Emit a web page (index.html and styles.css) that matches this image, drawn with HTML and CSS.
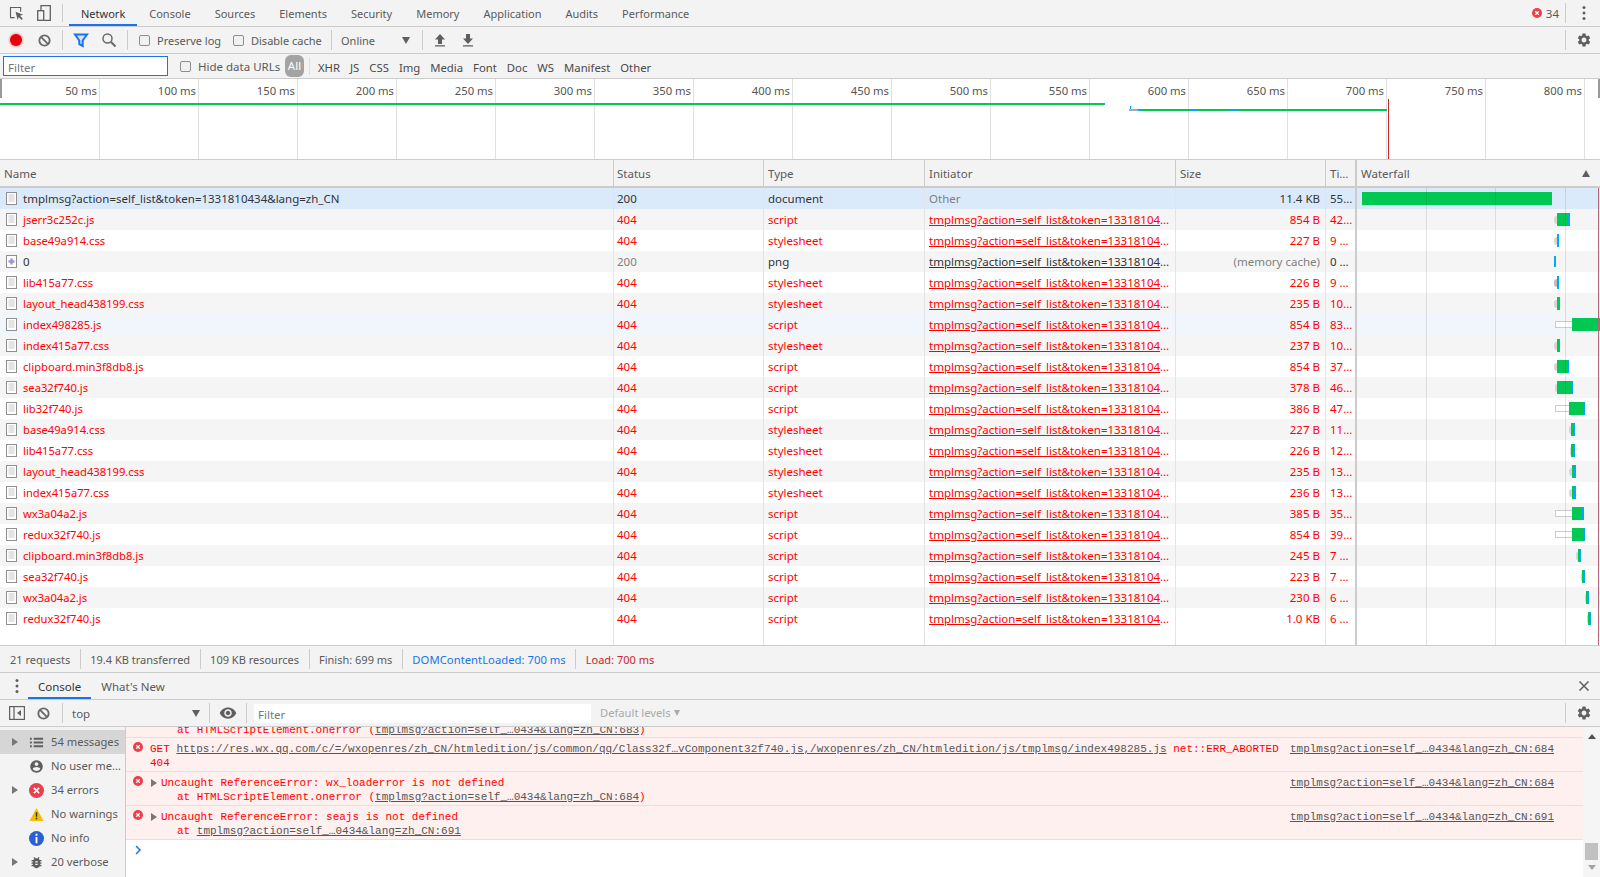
FILE: index.html
```html
<!DOCTYPE html>
<html lang="en">
<head>
<meta charset="utf-8">
<title>DevTools Network</title>
<link rel="stylesheet" href="styles.css">
</head>
<body>
<svg class="sprite" xmlns="http://www.w3.org/2000/svg">
  <symbol id="gear" viewBox="0 0 24 24"><path d="M19.14 12.94c.04-.3.06-.61.06-.94 0-.32-.02-.64-.07-.94l2.03-1.58c.18-.14.23-.41.12-.61l-1.92-3.32c-.12-.22-.37-.29-.59-.22l-2.39.96c-.5-.38-1.03-.7-1.62-.94l-.36-2.54c-.04-.24-.24-.41-.48-.41h-3.84c-.24 0-.43.17-.47.41l-.36 2.54c-.59.24-1.13.57-1.62.94l-2.39-.96c-.22-.08-.47 0-.59.22L2.74 8.87c-.12.21-.08.47.12.61l2.03 1.58c-.05.3-.09.63-.09.94s.02.64.07.94l-2.03 1.58c-.18.14-.23.41-.12.61l1.92 3.32c.12.22.37.29.59.22l2.39-.96c.5.38 1.03.7 1.62.94l.36 2.54c.05.24.24.41.48.41h3.84c.24 0 .44-.17.47-.41l.36-2.54c.59-.24 1.13-.56 1.62-.94l2.39.96c.22.08.47 0 .59-.22l1.92-3.32c.12-.22.07-.47-.12-.61l-2.01-1.58zM12 15.6c-1.98 0-3.6-1.62-3.6-3.6s1.62-3.6 3.6-3.6 3.6 1.62 3.6 3.6-1.62 3.6-3.6 3.6z" fill="#5f5f5f"/></symbol>
  <symbol id="clear" viewBox="0 0 16 16"><circle cx="8" cy="8" r="5.5" fill="none" stroke="#6a6a6a" stroke-width="2"/><path d="M4.2 4.2l7.6 7.6" stroke="#6a6a6a" stroke-width="2"/></symbol>
  <symbol id="err" viewBox="0 0 16 16"><circle cx="8" cy="8" r="8" fill="#e8404c"/><path d="M5.2 5.2l5.6 5.6M10.8 5.2l-5.6 5.6" stroke="#fff" stroke-width="1.8"/></symbol>
  <symbol id="doc" viewBox="0 0 11 13"><rect x=".5" y=".5" width="10" height="12" fill="#fff" stroke="#8f8f8f"/><path d="M2.5 3h6M2.5 5h6M2.5 7h6M2.5 9h6" stroke="#c8c8c8"/></symbol>
  <symbol id="imgf" viewBox="0 0 11 13"><rect x=".5" y=".5" width="10" height="12" fill="#fff" stroke="#8f8f8f"/><path d="M5.5 3.5v6M2.5 6.5h6" stroke="#9a9ac8" stroke-width="2.4"/></symbol>
</svg>

<div class="bar tabs">
  <svg class="ico inspect" viewBox="0 0 16 16"><path d="M1 1h12v5h-1.2V2.200H2.200v9.600H6V13H1z" fill="#5f5f5f"/><path d="M7 6l8 3.200-3.300 1.300 3 3-1.300 1.300-3-3L9.200 15z" fill="#5f5f5f"/></svg>
  <svg class="ico device" viewBox="0 0 14 16"><path d="M4 5V.7h9.300v14.600H7" fill="none" stroke="#5f5f5f" stroke-width="1.300"/><rect x=".7" y="5.700" width="6" height="9.600" fill="none" stroke="#5f5f5f" stroke-width="1.300"/></svg>
  <span class="sep sep-tabs"></span>
  <span class="tab active">Network</span>
  <span class="tab">Console</span>
  <span class="tab">Sources</span>
  <span class="tab">Elements</span>
  <span class="tab">Security</span>
  <span class="tab">Memory</span>
  <span class="tab">Application</span>
  <span class="tab">Audits</span>
  <span class="tab">Performance</span>
  <span class="grow"></span>
  <svg class="ico err-top"><use href="#err"/></svg>
  <span class="err-count">34</span>
  <span class="sep"></span>
  <svg class="ico dots" viewBox="0 0 4 16"><circle cx="2" cy="2.500" r="1.500"/><circle cx="2" cy="8" r="1.500"/><circle cx="2" cy="13.500" r="1.500"/></svg>
</div>

<div class="bar toolbar">
  <span class="btn"><span class="record"></span></span>
  <span class="btn"><svg class="ico i14"><use href="#clear"/></svg></span>
  <span class="sep sep-m"></span>
  <span class="btn"><svg class="ico i15" viewBox="0 0 16 16"><path d="M2 2.500h12L9.700 8.500v5.500l-3.400-1.800V8.500z" fill="#cfe2fb" stroke="#1a73e8" stroke-width="2"/></svg></span>
  <span class="btn"><svg class="ico i15" viewBox="0 0 16 16"><circle cx="6.500" cy="6.500" r="4.500" fill="none" stroke="#6a6a6a" stroke-width="1.500"/><path d="M10 10l4.500 4.500" stroke="#6a6a6a" stroke-width="2"/></svg></span>
  <span class="sep sep-m"></span>
  <label class="check lbl-preserve"><input type="checkbox">Preserve log</label>
  <label class="check lbl-cache"><input type="checkbox">Disable cache</label>
  <span class="sep"></span>
  <span class="online">Online</span>
  <span class="tri-down"></span>
  <span class="sep sep-online"></span>
  <span class="btn"><svg class="ico i13" viewBox="0 0 12 14"><path d="M6 1l5 5.500H8V11H4V6.500H1zM1 12.200h10v1.300H1z" fill="#5f5f5f"/></svg></span>
  <span class="btn"><svg class="ico i13" viewBox="0 0 12 14"><path d="M6 11L1 5.500h3V1h4v4.500h3zM1 12.200h10v1.300H1z" fill="#5f5f5f"/></svg></span>
  <span class="grow"></span>
  <span class="sep"></span>
  <svg class="ico gear"><use href="#gear"/></svg>
</div>

<div class="bar filterbar">
  <span class="filter-input">Filter</span>
  <label class="check lbl-hide"><input type="checkbox">Hide data URLs</label>
  <span class="pill">All</span>
  <span class="sep sep-all"></span>
  <span class="ftype">XHR</span>
  <span class="ftype">JS</span>
  <span class="ftype">CSS</span>
  <span class="ftype">Img</span>
  <span class="ftype">Media</span>
  <span class="ftype">Font</span>
  <span class="ftype">Doc</span>
  <span class="ftype">WS</span>
  <span class="ftype">Manifest</span>
  <span class="ftype">Other</span>
</div>

<div class="overview">
  <div class="ticks">
    <span class="tick">50 ms</span><span class="tick">100 ms</span><span class="tick">150 ms</span><span class="tick">200 ms</span><span class="tick">250 ms</span><span class="tick">300 ms</span><span class="tick">350 ms</span><span class="tick">400 ms</span><span class="tick">450 ms</span><span class="tick">500 ms</span><span class="tick">550 ms</span><span class="tick">600 ms</span><span class="tick">650 ms</span><span class="tick">700 ms</span><span class="tick">750 ms</span><span class="tick">800 ms</span>
  </div>
  <span class="grab grab-l"></span>
  <span class="grab grab-r"></span>
  <span class="ov-line1"></span>
  <span class="ov-tick"></span>
  <span class="ov-line2"></span>
  <span class="ov-load"></span>
</div>

<div class="net-row net-head">
  <span class="cell cname">Name</span>
  <span class="cell">Status</span>
  <span class="cell">Type</span>
  <span class="cell">Initiator</span>
  <span class="cell">Size</span>
  <span class="cell">Ti…</span>
  <span class="cell cwf">Waterfall<span class="tri-up"></span></span>
</div>

<div class="rows">
  <div class="net-row sel">
    <span class="cell cname"><svg class="fico"><use href="#doc"/></svg>tmplmsg?action=self_list&amp;token=1331810434&amp;lang=zh_CN</span>
    <span class="cell">200</span><span class="cell">document</span><span class="cell muted">Other</span><span class="cell csize">11.4 KB</span><span class="cell">55…</span>
    <span class="wf"><i class="r" style="margin-left:5px;width:189px"></i><i class="d" style="width:1px"></i></span>
  </div>
  <div class="net-row err alt">
    <span class="cell cname"><svg class="fico"><use href="#doc"/></svg>jserr3c252c.js</span>
    <span class="cell">404</span><span class="cell">script</span><span class="cell"><a>tmplmsg?action=self_list&amp;token=13318104</a>…</span><span class="cell csize">854 B</span><span class="cell">42…</span>
    <span class="wf"><i class="w" style="margin-left:197px;width:3px"></i><i class="r" style="width:11px"></i><i class="d" style="width:2px"></i></span>
  </div>
  <div class="net-row err">
    <span class="cell cname"><svg class="fico"><use href="#doc"/></svg>base49a914.css</span>
    <span class="cell">404</span><span class="cell">stylesheet</span><span class="cell"><a>tmplmsg?action=self_list&amp;token=13318104</a>…</span><span class="cell csize">227 B</span><span class="cell">9 …</span>
    <span class="wf"><i class="w" style="margin-left:197px;width:3px"></i><i class="r" style="width:1px"></i><i class="d" style="width:1px"></i></span>
  </div>
  <div class="net-row alt">
    <span class="cell cname"><svg class="fico"><use href="#imgf"/></svg>0</span>
    <span class="cell muted">200</span><span class="cell">png</span><span class="cell"><a>tmplmsg?action=self_list&amp;token=13318104</a>…</span><span class="cell csize muted">(memory cache)</span><span class="cell">0 …</span>
    <span class="wf"><i class="d short" style="margin-left:197px;width:2px"></i></span>
  </div>
  <div class="net-row err">
    <span class="cell cname"><svg class="fico"><use href="#doc"/></svg>lib415a77.css</span>
    <span class="cell">404</span><span class="cell">stylesheet</span><span class="cell"><a>tmplmsg?action=self_list&amp;token=13318104</a>…</span><span class="cell csize">226 B</span><span class="cell">9 …</span>
    <span class="wf"><i class="w dark" style="margin-left:197px;width:3px"></i><i class="r" style="width:1px"></i><i class="d" style="width:1px"></i></span>
  </div>
  <div class="net-row err alt">
    <span class="cell cname"><svg class="fico"><use href="#doc"/></svg>layout_head438199.css</span>
    <span class="cell">404</span><span class="cell">stylesheet</span><span class="cell"><a>tmplmsg?action=self_list&amp;token=13318104</a>…</span><span class="cell csize">235 B</span><span class="cell">10…</span>
    <span class="wf"><i class="w" style="margin-left:197px;width:3px"></i><i class="r" style="width:2px"></i><i class="d" style="width:1px"></i></span>
  </div>
  <div class="net-row err hover">
    <span class="cell cname"><svg class="fico"><use href="#doc"/></svg>index498285.js</span>
    <span class="cell">404</span><span class="cell">script</span><span class="cell"><a>tmplmsg?action=self_list&amp;token=13318104</a>…</span><span class="cell csize">854 B</span><span class="cell">83…</span>
    <span class="wf"><i class="q" style="margin-left:198px;width:17px"></i><i class="r" style="width:28px"></i></span>
  </div>
  <div class="net-row err alt">
    <span class="cell cname"><svg class="fico"><use href="#doc"/></svg>index415a77.css</span>
    <span class="cell">404</span><span class="cell">stylesheet</span><span class="cell"><a>tmplmsg?action=self_list&amp;token=13318104</a>…</span><span class="cell csize">237 B</span><span class="cell">10…</span>
    <span class="wf"><i class="w" style="margin-left:197px;width:3px"></i><i class="r" style="width:2px"></i><i class="d" style="width:1px"></i></span>
  </div>
  <div class="net-row err">
    <span class="cell cname"><svg class="fico"><use href="#doc"/></svg>clipboard.min3f8db8.js</span>
    <span class="cell">404</span><span class="cell">script</span><span class="cell"><a>tmplmsg?action=self_list&amp;token=13318104</a>…</span><span class="cell csize">854 B</span><span class="cell">37…</span>
    <span class="wf"><i class="w" style="margin-left:197px;width:3px"></i><i class="r" style="width:11px"></i><i class="d" style="width:1px"></i></span>
  </div>
  <div class="net-row err alt">
    <span class="cell cname"><svg class="fico"><use href="#doc"/></svg>sea32f740.js</span>
    <span class="cell">404</span><span class="cell">script</span><span class="cell"><a>tmplmsg?action=self_list&amp;token=13318104</a>…</span><span class="cell csize">378 B</span><span class="cell">46…</span>
    <span class="wf"><i class="w" style="margin-left:198px;width:2px"></i><i class="r" style="width:15px"></i><i class="d" style="width:1px"></i></span>
  </div>
  <div class="net-row err">
    <span class="cell cname"><svg class="fico"><use href="#doc"/></svg>lib32f740.js</span>
    <span class="cell">404</span><span class="cell">script</span><span class="cell"><a>tmplmsg?action=self_list&amp;token=13318104</a>…</span><span class="cell csize">386 B</span><span class="cell">47…</span>
    <span class="wf"><i class="q" style="margin-left:198px;width:14px"></i><i class="r" style="width:15px"></i><i class="d" style="width:1px"></i></span>
  </div>
  <div class="net-row err alt">
    <span class="cell cname"><svg class="fico"><use href="#doc"/></svg>base49a914.css</span>
    <span class="cell">404</span><span class="cell">stylesheet</span><span class="cell"><a>tmplmsg?action=self_list&amp;token=13318104</a>…</span><span class="cell csize">227 B</span><span class="cell">11…</span>
    <span class="wf"><i class="w" style="margin-left:212px;width:2px"></i><i class="r" style="width:3px"></i><i class="d" style="width:1px"></i></span>
  </div>
  <div class="net-row err">
    <span class="cell cname"><svg class="fico"><use href="#doc"/></svg>lib415a77.css</span>
    <span class="cell">404</span><span class="cell">stylesheet</span><span class="cell"><a>tmplmsg?action=self_list&amp;token=13318104</a>…</span><span class="cell csize">226 B</span><span class="cell">12…</span>
    <span class="wf"><i class="w" style="margin-left:213px;width:1px"></i><i class="r" style="width:3px"></i><i class="d" style="width:1px"></i></span>
  </div>
  <div class="net-row err alt">
    <span class="cell cname"><svg class="fico"><use href="#doc"/></svg>layout_head438199.css</span>
    <span class="cell">404</span><span class="cell">stylesheet</span><span class="cell"><a>tmplmsg?action=self_list&amp;token=13318104</a>…</span><span class="cell csize">235 B</span><span class="cell">13…</span>
    <span class="wf"><i class="w" style="margin-left:212px;width:3px"></i><i class="r" style="width:2px"></i><i class="d" style="width:2px"></i></span>
  </div>
  <div class="net-row err">
    <span class="cell cname"><svg class="fico"><use href="#doc"/></svg>index415a77.css</span>
    <span class="cell">404</span><span class="cell">stylesheet</span><span class="cell"><a>tmplmsg?action=self_list&amp;token=13318104</a>…</span><span class="cell csize">236 B</span><span class="cell">13…</span>
    <span class="wf"><i class="w" style="margin-left:212px;width:3px"></i><i class="r" style="width:2px"></i><i class="d" style="width:2px"></i></span>
  </div>
  <div class="net-row err alt">
    <span class="cell cname"><svg class="fico"><use href="#doc"/></svg>wx3a04a2.js</span>
    <span class="cell">404</span><span class="cell">script</span><span class="cell"><a>tmplmsg?action=self_list&amp;token=13318104</a>…</span><span class="cell csize">385 B</span><span class="cell">35…</span>
    <span class="wf"><i class="q" style="margin-left:198px;width:17px"></i><i class="r" style="width:10px"></i><i class="d" style="width:2px"></i></span>
  </div>
  <div class="net-row err">
    <span class="cell cname"><svg class="fico"><use href="#doc"/></svg>redux32f740.js</span>
    <span class="cell">404</span><span class="cell">script</span><span class="cell"><a>tmplmsg?action=self_list&amp;token=13318104</a>…</span><span class="cell csize">854 B</span><span class="cell">39…</span>
    <span class="wf"><i class="q" style="margin-left:198px;width:17px"></i><i class="r" style="width:12px"></i><i class="d" style="width:1px"></i></span>
  </div>
  <div class="net-row err alt">
    <span class="cell cname"><svg class="fico"><use href="#doc"/></svg>clipboard.min3f8db8.js</span>
    <span class="cell">404</span><span class="cell">script</span><span class="cell"><a>tmplmsg?action=self_list&amp;token=13318104</a>…</span><span class="cell csize">245 B</span><span class="cell">7 …</span>
    <span class="wf"><i class="w" style="margin-left:219px;width:2px"></i><i class="r" style="width:2px"></i><i class="d" style="width:1px"></i></span>
  </div>
  <div class="net-row err">
    <span class="cell cname"><svg class="fico"><use href="#doc"/></svg>sea32f740.js</span>
    <span class="cell">404</span><span class="cell">script</span><span class="cell"><a>tmplmsg?action=self_list&amp;token=13318104</a>…</span><span class="cell csize">223 B</span><span class="cell">7 …</span>
    <span class="wf"><i class="w" style="margin-left:224px;width:1px"></i><i class="r" style="width:1px"></i><i class="d" style="width:2px"></i></span>
  </div>
  <div class="net-row err alt">
    <span class="cell cname"><svg class="fico"><use href="#doc"/></svg>wx3a04a2.js</span>
    <span class="cell">404</span><span class="cell">script</span><span class="cell"><a>tmplmsg?action=self_list&amp;token=13318104</a>…</span><span class="cell csize">230 B</span><span class="cell">6 …</span>
    <span class="wf"><i class="w" style="margin-left:228px;width:1px"></i><i class="r" style="width:1px"></i><i class="d" style="width:2px"></i></span>
  </div>
  <div class="net-row err">
    <span class="cell cname"><svg class="fico"><use href="#doc"/></svg>redux32f740.js</span>
    <span class="cell">404</span><span class="cell">script</span><span class="cell"><a>tmplmsg?action=self_list&amp;token=13318104</a>…</span><span class="cell csize">1.0 KB</span><span class="cell">6 …</span>
    <span class="wf"><i class="w" style="margin-left:230px;width:1px"></i><i class="r" style="width:2px"></i><i class="d" style="width:1px"></i></span>
  </div>
  <div class="net-row filler">
    <span class="cell"></span><span class="cell"></span><span class="cell"></span><span class="cell"></span><span class="cell"></span><span class="cell"></span><span class="wf"></span>
  </div>
  <span class="wgrid g1"></span>
  <span class="wgrid g2"></span>
  <span class="wgrid g3"></span>
  <span class="wload"></span>
</div>

<div class="bar statusbar">
  <span class="stat">21 requests</span>
  <span class="stat">19.4 KB transferred</span>
  <span class="stat">109 KB resources</span>
  <span class="stat">Finish: 699 ms</span>
  <span class="stat dcl">DOMContentLoaded: 700 ms</span>
  <span class="stat load">Load: 700 ms</span>
</div>

<div class="bar drawer-tabs">
  <svg class="ico dots dots-drawer" viewBox="0 0 4 16"><circle cx="2" cy="2.500" r="1.500"/><circle cx="2" cy="8" r="1.500"/><circle cx="2" cy="13.500" r="1.500"/></svg>
  <span class="tab active dtab">Console</span>
  <span class="tab dtab">What's New</span>
  <span class="grow"></span>
  <svg class="ico closex" viewBox="0 0 12 12"><path d="M1.500 1.500l9 9M10.500 1.500l-9 9" stroke="#5f5f5f" stroke-width="1.500"/></svg>
</div>

<div class="bar con-toolbar">
  <svg class="ico sidetoggle" viewBox="0 0 16 14"><rect x=".6" y=".6" width="14.800" height="12.800" fill="none" stroke="#5f5f5f" stroke-width="1.200"/><path d="M5 1v12" stroke="#5f5f5f" stroke-width="1.200"/><path d="M12 4v6L8 7z" fill="#5f5f5f"/></svg>
  <svg class="ico i14 conclear"><use href="#clear"/></svg>
  <span class="sep sep-conclear"></span>
  <span class="ctx">top</span>
  <span class="tri-down"></span>
  <span class="sep sep-ctx"></span>
  <svg class="ico eye" viewBox="0 0 24 24"><path d="M12 4.500C7 4.500 2.730 7.610 1 12c1.730 4.390 6 7.500 11 7.500s9.270-3.110 11-7.500c-1.730-4.390-6-7.500-11-7.500zM12 17c-2.760 0-5-2.240-5-5s2.240-5 5-5 5 2.240 5 5-2.240 5-5 5zm0-8c-1.660 0-3 1.340-3 3s1.340 3 3 3 3-1.340 3-3-1.340-3-3-3z" fill="#5f5f5f"/></svg>
  <span class="sep sep-eye"></span>
  <span class="con-filter">Filter</span>
  <span class="levels">Default levels</span>
  <span class="tri-down tri-light"></span>
  <span class="grow"></span>
  <span class="sep"></span>
  <svg class="ico gear"><use href="#gear"/></svg>
</div>

<div class="console">
  <aside class="side">
    <div class="side-row selected"><span class="tri"></span><svg class="ico sico" viewBox="0 0 16 16"><path d="M1 3h2v2H1zM5 3h10v2H5zM1 7h2v2H1zM5 7h10v2H5zM1 11h2v2H1zM5 11h10v2H5z" fill="#5f5f5f"/></svg>54 messages</div>
    <div class="side-row"><span class="tri none"></span><svg class="ico sico" viewBox="0 0 24 24"><path d="M12 2C6.480 2 2 6.480 2 12s4.480 10 10 10 10-4.480 10-10S17.520 2 12 2zm0 3c1.660 0 3 1.340 3 3s-1.340 3-3 3-3-1.340-3-3 1.340-3 3-3zm0 14.200c-2.500 0-4.710-1.280-6-3.220.030-1.990 4-3.080 6-3.080 1.990 0 5.970 1.090 6 3.080-1.290 1.940-3.500 3.220-6 3.220z" fill="#5f5f5f"/></svg>No user me…</div>
    <div class="side-row"><span class="tri"></span><svg class="ico sico"><use href="#err"/></svg>34 errors</div>
    <div class="side-row"><span class="tri none"></span><svg class="ico sico" viewBox="0 0 16 16"><path d="M8 1l7.500 14H.5z" fill="#f4bd00"/><path d="M7.200 5.500h1.600v5H7.200zM7.200 11.500h1.600v1.600H7.200z" fill="#333"/></svg>No warnings</div>
    <div class="side-row"><span class="tri none"></span><svg class="ico sico" viewBox="0 0 16 16"><circle cx="8" cy="8" r="8" fill="#2a5fd6"/><path d="M7 3h2v2H7zM7 6.500h2V13H7z" fill="#fff"/></svg>No info</div>
    <div class="side-row"><span class="tri"></span><svg class="ico sico" viewBox="0 0 24 24"><path d="M20 8h-2.810c-.45-.78-1.070-1.450-1.820-1.960L17 4.410 15.590 3l-2.170 2.170C12.960 5.060 12.490 5 12 5c-.49 0-.96.060-1.410.17L8.410 3 7 4.410l1.620 1.630C7.880 6.550 7.260 7.220 6.810 8H4v2h2.090c-.05.33-.09.66-.09 1v1H4v2h2v1c0 .34.040.67.09 1H4v2h2.810c1.040 1.790 2.970 3 5.190 3s4.150-1.210 5.190-3H20v-2h-2.090c.05-.33.090-.66.090-1v-1h2v-2h-2v-1c0-.34-.040-.67-.09-1H20V8zm-6 8h-4v-2h4v2zm0-4h-4v-2h4v2z" fill="#5f5f5f"/></svg>20 verbose</div>
  </aside>
  <div class="messages">
    <div class="msg partial"><span class="stack-first">at HTMLScriptElement.onerror (<a>tmplmsg?action=self_…0434&amp;lang=zh_CN:683</a>)</span></div>
    <div class="msg">
      <svg class="msg-ico"><use href="#err"/></svg>
      <div class="msg-body">
        <div>GET <a>https://res.wx.qq.com/c/=/wxopenres/zh_CN/htmledition/js/common/qq/Class32f…vComponent32f740.js,/wxopenres/zh_CN/htmledition/js/tmplmsg/index498285.js</a> net::ERR_ABORTED</div>
        <div>404</div>
      </div>
      <a class="src">tmplmsg?action=self_…0434&amp;lang=zh_CN:684</a>
    </div>
    <div class="msg">
      <svg class="msg-ico"><use href="#err"/></svg>
      <span class="expand"></span>
      <div class="msg-body">
        <div>Uncaught ReferenceError: wx_loaderror is not defined</div>
        <div class="stack">at HTMLScriptElement.onerror (<a>tmplmsg?action=self_…0434&amp;lang=zh_CN:684</a>)</div>
      </div>
      <a class="src">tmplmsg?action=self_…0434&amp;lang=zh_CN:684</a>
    </div>
    <div class="msg">
      <svg class="msg-ico"><use href="#err"/></svg>
      <span class="expand"></span>
      <div class="msg-body">
        <div>Uncaught ReferenceError: seajs is not defined</div>
        <div class="stack">at <a>tmplmsg?action=self_…0434&amp;lang=zh_CN:691</a></div>
      </div>
      <a class="src">tmplmsg?action=self_…0434&amp;lang=zh_CN:691</a>
    </div>
    <div class="prompt"><svg class="prompt-ico" viewBox="0 0 8 10"><path d="M2 1l4 4-4 4" fill="none" stroke="#1a73e8" stroke-width="1.500"/></svg></div>
  </div>
  <div class="scroll">
    <span class="sc-up"></span>
    <span class="grow"></span>
    <span class="sc-thumb"></span>
    <span class="sc-down"></span>
  </div>
</div>
</body>
</html>
```

FILE: styles.css
```css
* { box-sizing: border-box; }
html, body { margin: 0; padding: 0; }
body {
  width: 1600px; height: 877px; overflow: hidden; position: relative;
  display: flex; flex-direction: column;
  font: 11.5px/16px "Noto Sans", "Open Sans", sans-serif;
  color: #5a5a5a; background: #fff;
}
.sprite { display: none; }
.grow { flex: 1; }
.ico { display: block; flex: none; }
.bar { display: flex; align-items: center; flex: none; background: #f3f3f3; border-bottom: 1px solid #ccc; }
.sep { display: block; flex: none; width: 1px; height: 20px; background: #ccc; }

.tabs { height: 27px; }
.inspect { width: 15px; height: 15px; margin-left: 9px; }
.device { width: 14px; height: 16px; margin-left: 13px; }
.sep-tabs { margin: 0 6px 0 11px; height: 18px; }
.tab { height: 26px; line-height: 28px; padding: 0 12px; flex: none; font-size: 11px; }
.tab.active { color: #333; box-shadow: inset 0 -2px 0 #1a73e8; }
.err-top { width: 10px; height: 10px; }
.err-count { margin: 0 6px 0 4px; padding-top: 1px; }
.dots { width: 4px; height: 16px; margin: 0 14px 0 16px; fill: #5f5f5f; }

.toolbar { height: 27px; padding-left: 2px; font-size: 11px; }
.btn { width: 28px; height: 26px; flex: none; display: flex; align-items: center; justify-content: center; }
.record { width: 12px; height: 12px; border-radius: 50%; background: #e8000c; box-shadow: 0 0 2px 1px #f6a5a5; }
.i14 { width: 15px; height: 15px; }
.i15 { width: 16px; height: 16px; }
.i13 { width: 12px; height: 14px; }
.sep-m { margin: 0 4px; }
.check { display: flex; align-items: center; flex: none; }
.check input { appearance: none; margin: 0 7px 0 0; width: 11px; height: 11px; flex: none; border: 1px solid #8e8e8e; border-radius: 2px; background: #f1f1f1; }
.lbl-preserve { width: 94px; margin-left: 7px; padding-top: 1px; }
.lbl-cache { width: 98px; padding-top: 1px; }
.online { width: 61px; margin-left: 9px; padding-top: 1px; }
.tri-down { width: 0; height: 0; flex: none; border-left: 4px solid transparent; border-right: 4px solid transparent; border-top: 7px solid #5f5f5f; }
.sep-online { margin: 0 3px 0 12px; }
.gear { width: 16px; height: 16px; margin: 0 8px 0 10px; }

.filterbar { height: 25px; padding-left: 3px; }
.filter-input { width: 165px; height: 20px; line-height: 21px; padding-left: 4px; border: 1px solid #1a73e8; background: #fff; color: #777; flex: none; }
.lbl-hide { margin-left: 12px; width: 105px; padding-top: 1px; }
.pill { width: 19px; height: 22px; line-height: 22px; border-radius: 6px; background: #a3a3a3; color: #fff; text-align: center; flex: none; }
.sep-all { margin: 0 8px 0 5px; height: 18px; background: #ddd; }
.ftype { margin-right: 10px; flex: none; color: #4a4a4a; padding-top: 3px; font-size: 11.3px; }

.overview { position: relative; height: 81px; flex: none; border-bottom: 1px solid #ccc; background: #fff; }
.ticks { display: flex; height: 100%; padding-left: 1px; }
.tick { width: 99px; flex: none; text-align: right; padding: 4px 2px 0 0; border-right: 1px solid #e0e0e0; color: #555; font-size: 11.3px; }
.grab { position: absolute; top: 0; width: 2px; height: 19px; background: #9a9a9a; }
.grab-l { left: 0; }
.grab-r { right: 0; }
.ov-line1 { position: absolute; left: 0; top: 24px; width: 1105px; height: 2px; background: #00c853; border-right: 2px solid #03a9f4; }
.ov-tick { position: absolute; left: 1130px; top: 27px; width: 1px; height: 3px; background: #03a9f4; }
.ov-line2 { position: absolute; left: 1129px; top: 30px; width: 258px; height: 2px; background: linear-gradient(90deg, #aaa 0 9px, #03a9f4 9px 12px, #00c853 12px 60px, #03a9f4 60px 68px, #00c853 68px 100px, #03a9f4 100px 108px, #00c853 108px); }
.ov-load { position: absolute; left: 1388px; top: 20px; width: 1px; height: 60px; background: #c62828; }

.net-row { display: grid; grid-template-columns: 614px 150px 161px 251px 150px 31px 243px; height: 21px; flex: none; color: #333; }
.cell { display: block; padding: 0 4px; line-height: 21px; white-space: nowrap; overflow: hidden; border-right: 1px solid #e4e4e4; }
.cell:nth-child(2) { padding-left: 3px; }
.net-head { height: 28px; background: #f3f3f3; border-bottom: 2px solid #ccc; color: #5a5a5a; }
.net-head .cell { line-height: 28px; border-right-color: #ccc; }
.net-head .cwf { border-right: 0; border-left: 2px solid #ccc; margin-left: -2px; position: relative; padding-left: 4px; }
.tri-up { position: absolute; right: 10px; top: 10px; width: 0; height: 0; border-left: 4px solid transparent; border-right: 4px solid transparent; border-bottom: 7px solid #5f5f5f; }
.rows { position: relative; flex: none; height: 458px; display: flex; flex-direction: column; border-bottom: 1px solid #ccc; }
.net-row.alt { background: #f5f5f5; }
.net-row.sel { background: #dbeafb; }
.net-row.hover { background: #f1f6fd; }
.net-row.err { color: #f00; }
.net-row.filler { flex: 1; }
.cname { display: flex; align-items: center; padding-left: 6px; }
.err .cname { font-size: 11.2px; }
.net-head .cname { padding: 2px 0 0 4px; }
.fico { width: 11px; height: 13px; margin-right: 6px; flex: none; }
.csize { text-align: right; padding-right: 5px; }
.muted { color: #808080; }
.cell a { text-decoration: underline; }
.wf { display: flex; align-items: center; border-left: 2px solid #ccc; margin-left: -2px; overflow: hidden; }
.wf i { display: block; flex: none; }
.wf .r { height: 13px; background: #00c853; }
.wf .d { height: 13px; background: #03a9f4; }
.wf .d.short { height: 11px; }
.wf .w { height: 8px; background: #d6d6d6; border-radius: 3px 0 0 3px; }
.wf .w.dark { background: #bdbdbd; }
.wf .q { height: 7px; background: #fff; border: 1px solid #ccc; border-right: 0; }
.wgrid { position: absolute; top: 0; bottom: 0; width: 1px; background: rgba(0, 0, 0, .1); }
.g1 { left: 1426px; }
.g2 { left: 1495px; }
.g3 { left: 1565px; }
.wload { position: absolute; top: 0; bottom: 0; right: 1px; width: 1px; background: #b4667a; }

.statusbar { height: 27px; font-size: 11px; }
.stat { padding: 0 9.5px; height: 20px; line-height: 21px; border-right: 1px solid #ccc; flex: none; }
.stat:first-child { padding-left: 10px; }
.stat.dcl { color: #1a73e8; font-size: 11.3px; }
.stat.load { color: #c62828; border-right: 0; }

.drawer-tabs { height: 27px; }
.dots-drawer { margin: 0 9px 0 15px; }
.dtab { padding: 0 10px; font-size: 11.5px; }
.closex { width: 12px; height: 12px; margin-right: 10px; }

.con-toolbar { height: 27px; }
.sidetoggle { width: 16px; height: 14px; margin-left: 9px; }
.conclear { margin: 0 11px 0 11px; }
.sep-conclear { margin-right: 9px; }
.ctx { width: 120px; flex: none; padding-top: 2px; }
.sep-ctx { margin-left: 9px; }
.eye { width: 18px; height: 18px; margin: 0 9px; }
.con-filter { width: 337px; height: 19px; line-height: 21px; padding-left: 4px; margin-left: 7px; background: #fff; color: #777; flex: none; }
.levels { margin-left: 9px; color: #aaa; width: 74px; flex: none; font-size: 11.2px; }
.tri-light { border-top-color: #aaa; border-left-width: 3px; border-right-width: 3px; border-top-width: 6px; }

.console { flex: 1; min-height: 0; display: flex; background: #fff; }
.side { width: 126px; flex: none; background: #f3f3f3; border-right: 1px solid #ccc; padding-top: 3px; font-size: 11.2px; }
.side-row { display: flex; align-items: center; height: 24px; white-space: nowrap; overflow: hidden; }
.side-row.selected { background: #d6d6d6; }
.tri { width: 0; height: 0; flex: none; margin: 0 11px 0 12px; border-top: 4px solid transparent; border-bottom: 4px solid transparent; border-left: 6px solid #777; }
.tri.none { border-left-color: transparent; }
.sico { width: 15px; height: 15px; margin-right: 7px; }

.messages { flex: 1; min-width: 0; font: 11px/14px "Liberation Mono", "DejaVu Sans Mono", monospace; color: #f00; display: flex; flex-direction: column; }
.messages a { color: #555; text-decoration: underline; }
.msg { display: flex; flex: none; background: #fff0f0; border-bottom: 1px solid #ffd6d6; padding: 4px 0 1px 7px; white-space: nowrap; }
.msg.partial { height: 11px; padding: 0 0 0 51px; align-items: flex-end; overflow: hidden; }
.msg-ico { width: 10px; height: 10px; flex: none; margin: 0 7px 0 0; }
.expand { width: 0; height: 0; flex: none; margin: 3px 4px 0 1px; border-top: 4px solid transparent; border-bottom: 4px solid transparent; border-left: 6px solid #777; }
.msg-body { flex: 1; min-width: 0; }
.stack { padding-left: 16px; }
.src { flex: none; margin-right: 29px; }
.prompt { padding: 5px 0 0 8px; }
.prompt-ico { display: block; width: 8px; height: 10px; }

.scroll { width: 17px; flex: none; background: #f5f5f5; display: flex; flex-direction: column; align-items: center; }
.sc-up { margin-top: 7px; width: 0; height: 0; border-left: 4px solid transparent; border-right: 4px solid transparent; border-bottom: 5px solid #505050; }
.sc-thumb { width: 13px; height: 17px; background: #c1c1c1; }
.sc-down { margin: 5px 0 7px; width: 0; height: 0; border-left: 4px solid transparent; border-right: 4px solid transparent; border-top: 5px solid #a3a3a3; }
```
